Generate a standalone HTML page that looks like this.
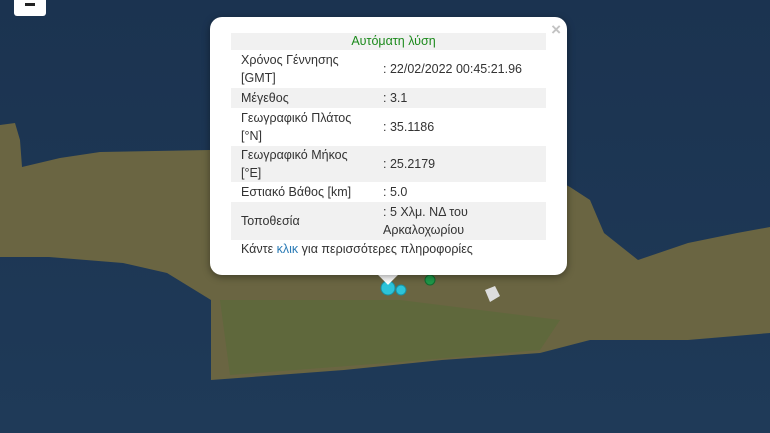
<!DOCTYPE html>
<html><head><meta charset="utf-8"><style>
body{margin:0;width:770px;height:433px;overflow:hidden;position:relative;font-family:"Liberation Sans",Arial,sans-serif;background:#1d3652}
svg.map{position:absolute;left:0;top:0}
.pop{position:absolute;left:210px;top:17px;width:357px;height:258px;background:#fff;border-radius:12px;box-shadow:0 2px 8px rgba(0,0,0,.4)}
.tip{position:absolute;left:381px;top:268px;width:14px;height:14px;background:#fff;transform:rotate(45deg)}
.x{position:absolute;right:6px;top:3px;color:#c3c3c3;font-size:17px;font-weight:bold}
table{position:absolute;left:21px;top:16px;width:315px;border-collapse:collapse;font-size:12.5px;color:#333}
td{padding:0 0 0 10px;line-height:18px;vertical-align:middle}
tr.g{background:#f1f1f1}
td.v{padding-left:0}
.h{text-align:center;color:#1c8a1c;height:17px;line-height:17px}
.more{position:absolute;left:31px;top:225px;font-size:12.5px;color:#333}
.more span{color:#2a7ab5}
.ctl{position:absolute;left:14px;top:-4px;width:32px;height:20px;background:#fff;border-radius:3px}
.ctl:after{content:"";position:absolute;left:11px;top:7px;width:10px;height:3px;background:#222}
</style></head><body>
<svg class="map" width="770" height="433">
<defs><linearGradient id="s" x1="0" y1="0" x2="0" y2="1"><stop offset="0" stop-color="#1b3350"/><stop offset="1" stop-color="#1f3a58"/></linearGradient></defs>
<rect width="770" height="433" fill="url(#s)"/>
<polygon fill="#6a6542" points="0,125 15,123 20,140 22,167 60,158 100,152 210,150 300,150 520,160 570,187 590,200 604,233 638,260 688,243 737,233 770,227 770,333 688,340 590,340 540,353 442,360 344,370 211,380 211,300 167,273 123,263 49,257 0,257"/>
<polygon fill="#5f683c" points="220,300 400,300 560,320 540,350 400,362 230,375"/>
<polygon fill="#ddd" points="485,290 495,286 500,296 490,302"/>
<circle cx="430" cy="280" r="5" fill="#1f9a4a" stroke="#136b30"/>
<circle cx="401" cy="290" r="5" fill="#2cc3d9" stroke="#1a8fa0"/>
<circle cx="388" cy="288" r="7" fill="#2cc3d9" stroke="#1a8fa0"/>
</svg>
<div class="ctl"></div>
<div class="tip"></div>
<div class="pop">
<div class="x">×</div>
<table>
<tr class="g"><td colspan="2" class="h">Αυτόματη λύση</td></tr>
<tr style="height:38px"><td style="width:142px">Χρόνος Γέννησης<br>[GMT]</td><td class="v">: 22/02/2022 00:45:21.96</td></tr>
<tr class="g" style="height:20px"><td>Μέγεθος</td><td class="v">: 3.1</td></tr>
<tr style="height:38px"><td>Γεωγραφικό Πλάτος<br>[°N]</td><td class="v">: 35.1186</td></tr>
<tr class="g" style="height:36px"><td>Γεωγραφικό Μήκος<br>[°E]</td><td class="v">: 25.2179</td></tr>
<tr style="height:20px"><td>Εστιακό Βάθος [km]</td><td class="v">: 5.0</td></tr>
<tr class="g" style="height:38px"><td>Τοποθεσία</td><td class="v">: 5 Χλμ. ΝΔ του<br>Αρκαλοχωρίου</td></tr>
</table>
<div class="more">Κάντε <span>κλικ</span> για περισσότερες πληροφορίες</div>
</div>
</body></html>
